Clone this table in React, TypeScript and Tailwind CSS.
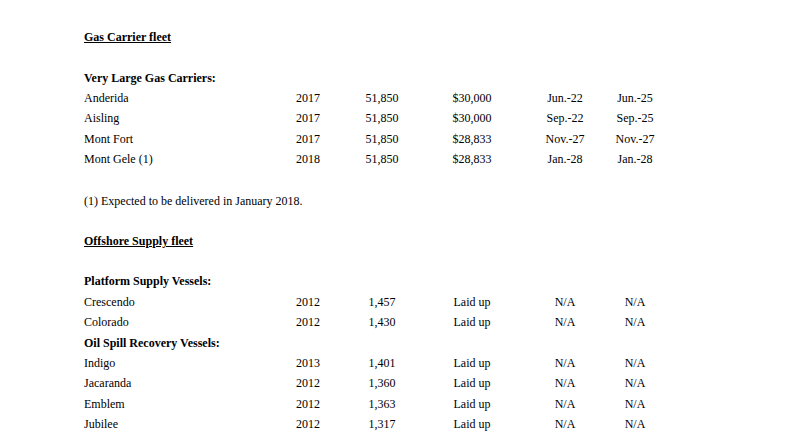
import React from "react";

type Row = [string, string, string, string, string, string];

const gas: Row[] = [
  ["Anderida", "2017", "51,850", "$30,000", "Jun.-22", "Jun.-25"],
  ["Aisling", "2017", "51,850", "$30,000", "Sep.-22", "Sep.-25"],
  ["Mont Fort", "2017", "51,850", "$28,833", "Nov.-27", "Nov.-27"],
  ["Mont Gele (1)", "2018", "51,850", "$28,833", "Jan.-28", "Jan.-28"],
];

const psv: Row[] = [
  ["Crescendo", "2012", "1,457", "Laid up", "N/A", "N/A"],
  ["Colorado", "2012", "1,430", "Laid up", "N/A", "N/A"],
];

const osrv: Row[] = [
  ["Indigo", "2013", "1,401", "Laid up", "N/A", "N/A"],
  ["Jacaranda", "2012", "1,360", "Laid up", "N/A", "N/A"],
  ["Emblem", "2012", "1,363", "Laid up", "N/A", "N/A"],
  ["Jubilee", "2012", "1,317", "Laid up", "N/A", "N/A"],
];

function DataRow({ r }: { r: Row }) {
  return (
    <div className="grid grid-cols-[194px_60px_88px_92px_94px_46px] h-[20.3px] items-center">
      <div>{r[0]}</div>
      <div className="text-center">{r[1]}</div>
      <div className="text-center">{r[2]}</div>
      <div className="text-center">{r[3]}</div>
      <div className="text-center">{r[4]}</div>
      <div className="text-center">{r[5]}</div>
    </div>
  );
}

export default function App() {
  return (
    <div
      className="w-[786px] h-[440px] bg-white text-black overflow-hidden pl-[84px] pt-[27px] text-[12px] leading-[20.3px]"
      style={{ fontFamily: '"Liberation Serif", "Times New Roman", serif' }}
    >
      <div className="font-bold underline h-[20px] leading-[20px]">Gas Carrier fleet</div>
      <div className="h-[21px]" />
      <div className="font-bold h-[20px] leading-[20px]">Very Large Gas Carriers:</div>
      {gas.map((r) => (
        <DataRow key={r[0]} r={r} />
      ))}
      <div className="h-[22px]" />
      <div className="h-[20px] leading-[20px]">(1) Expected to be delivered in January 2018.</div>
      <div className="h-[20px]" />
      <div className="font-bold underline h-[20px] leading-[20px]">Offshore Supply fleet</div>
      <div className="h-[20px]" />
      <div className="font-bold h-[21px] leading-[20px]">Platform Supply Vessels:</div>
      {psv.map((r) => (
        <DataRow key={r[0]} r={r} />
      ))}
      <div className="font-bold h-[20.3px] flex items-center">Oil Spill Recovery Vessels:</div>
      {osrv.map((r) => (
        <DataRow key={r[0]} r={r} />
      ))}
    </div>
  );
}
